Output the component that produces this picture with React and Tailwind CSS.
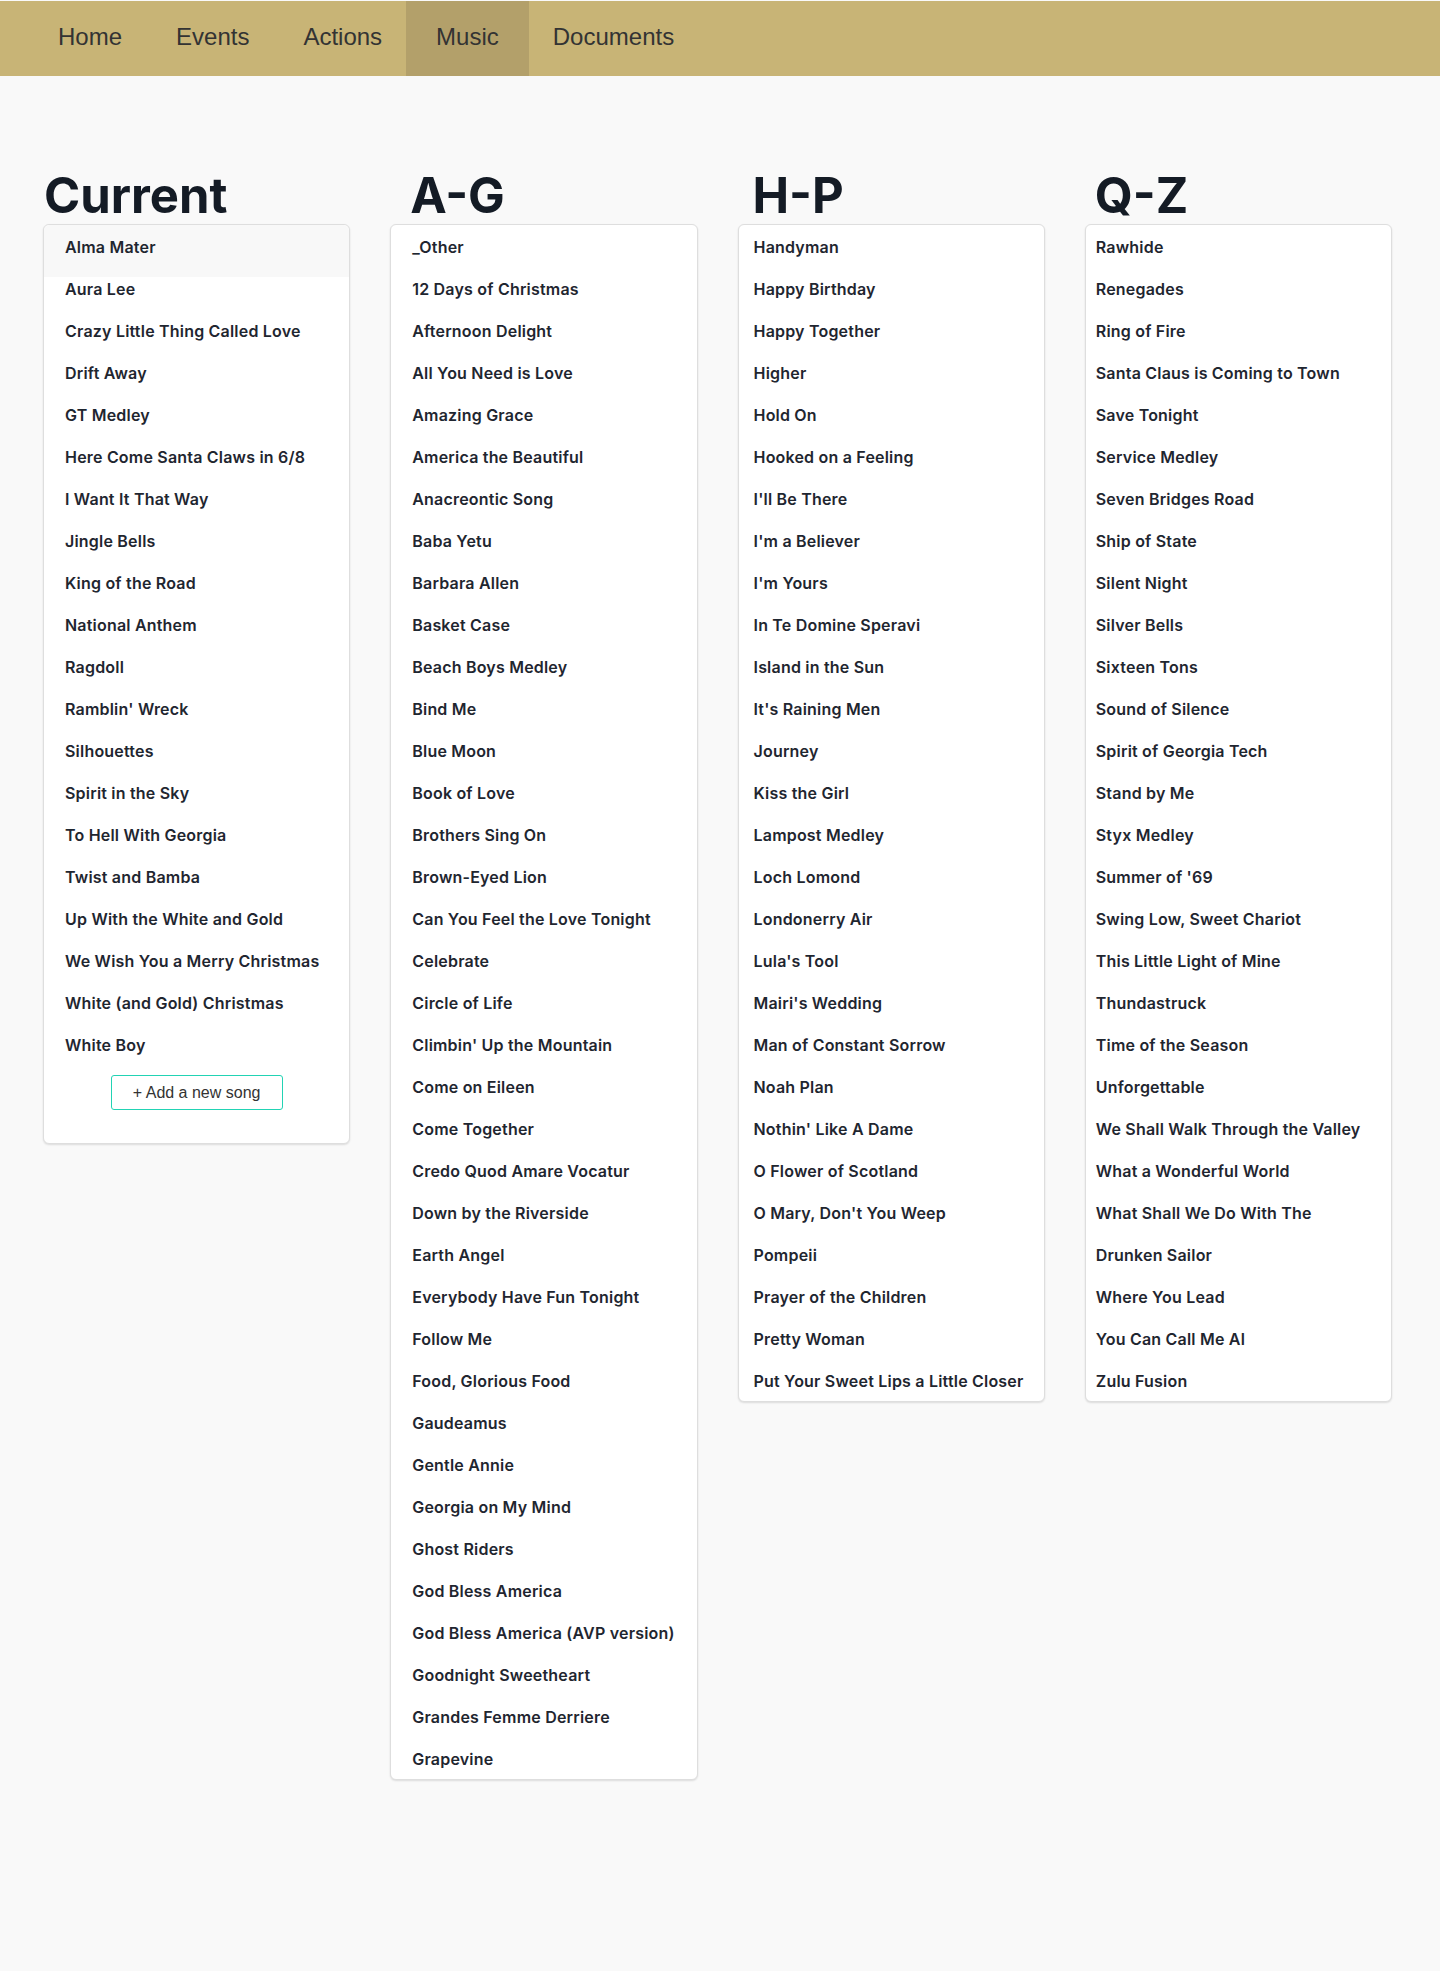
import React from "react";

const current = ["Alma Mater","Aura Lee","Crazy Little Thing Called Love","Drift Away","GT Medley","Here Come Santa Claws in 6/8","I Want It That Way","Jingle Bells","King of the Road","National Anthem","Ragdoll","Ramblin' Wreck","Silhouettes","Spirit in the Sky","To Hell With Georgia","Twist and Bamba","Up With the White and Gold","We Wish You a Merry Christmas","White (and Gold) Christmas","White Boy"];
const ag = ["_Other","12 Days of Christmas","Afternoon Delight","All You Need is Love","Amazing Grace","America the Beautiful","Anacreontic Song","Baba Yetu","Barbara Allen","Basket Case","Beach Boys Medley","Bind Me","Blue Moon","Book of Love","Brothers Sing On","Brown-Eyed Lion","Can You Feel the Love Tonight","Celebrate","Circle of Life","Climbin' Up the Mountain","Come on Eileen","Come Together","Credo Quod Amare Vocatur","Down by the Riverside","Earth Angel","Everybody Have Fun Tonight","Follow Me","Food, Glorious Food","Gaudeamus","Gentle Annie","Georgia on My Mind","Ghost Riders","God Bless America","God Bless America (AVP version)","Goodnight Sweetheart","Grandes Femme Derriere","Grapevine"];
const hp = ["Handyman","Happy Birthday","Happy Together","Higher","Hold On","Hooked on a Feeling","I'll Be There","I'm a Believer","I'm Yours","In Te Domine Speravi","Island in the Sun","It's Raining Men","Journey","Kiss the Girl","Lampost Medley","Loch Lomond","Londonerry Air","Lula's Tool","Mairi's Wedding","Man of Constant Sorrow","Noah Plan","Nothin' Like A Dame","O Flower of Scotland","O Mary, Don't You Weep","Pompeii","Prayer of the Children","Pretty Woman","Put Your Sweet Lips a Little Closer"];
const qz = ["Rawhide","Renegades","Ring of Fire","Santa Claus is Coming to Town","Save Tonight","Service Medley","Seven Bridges Road","Ship of State","Silent Night","Silver Bells","Sixteen Tons","Sound of Silence","Spirit of Georgia Tech","Stand by Me","Styx Medley","Summer of '69","Swing Low, Sweet Chariot","This Little Light of Mine","Thundastruck","Time of the Season","Unforgettable","We Shall Walk Through the Valley","What a Wonderful World","What Shall We Do With The","Drunken Sailor","Where You Lead","You Can Call Me Al","Zulu Fusion"];

function Row({ text, pad }) {
  return (
    <li className={`relative z-10 h-[42px] pt-[4px] leading-[37px] text-[16px] font-semibold tracking-[0.2px] text-[#1f2630] whitespace-nowrap ${pad}`}>
      {text}
    </li>
  );
}

function Column({ title, items, headPad, itemPad, highlight, children }) {
  return (
    <div className="flex flex-col">
      <h2 className={`h-[48px] leading-[48px] text-[49px] font-bold text-[#141b25] mb-[4px] ${headPad}`}>{title}</h2>
      <div className="relative isolate bg-white border border-[#dedede] rounded-[6px] shadow-[0_1px_2px_rgba(0,0,0,0.12)]">
        {highlight && (
          <div className="absolute left-0 right-0 top-0 h-[52px] bg-[#f8f8f8] rounded-t-[6px] z-0"></div>
        )}
        <ul>
          {items.map((t, i) => (
            <Row key={i} text={t} pad={itemPad} />
          ))}
        </ul>
        {children}
      </div>
    </div>
  );
}

export default function App() {
  const navItems = [
    { label: "Home", cls: "px-[27px]" },
    { label: "Events", cls: "px-[27px]" },
    { label: "Actions", cls: "pl-[27px] pr-[24px]" },
    { label: "Music", cls: "px-[30px] bg-[#b3a06a]" },
    { label: "Documents", cls: "pl-[24px] pr-[27px]" },
  ];
  return (
    <div className="min-h-[1971px] bg-[#f9f9f9] pt-px" style={{ fontFamily: "Inter, 'Noto Sans', sans-serif" }}>
      <nav className="h-[75px] bg-[#c8b476]">
        <ul className="flex h-full pl-[31px]" style={{ fontFamily: "'Liberation Sans', Arial, sans-serif" }}>
          {navItems.map((n) => (
            <li key={n.label} className={`h-[75px] leading-[71px] text-[24px] text-[#333333] ${n.cls}`}>
              {n.label}
            </li>
          ))}
        </ul>
      </nav>
      <main className="pt-[96px] pl-[43px] pb-[40px]">
        <div className="grid grid-cols-4 gap-x-[40px] w-[1349px] items-start">
          <Column title="Current" items={current} headPad="pl-[1px]" itemPad="pl-[21px]" highlight>
            <div className="flex justify-center pt-[10px] pb-[33px]">
              <button
                className="w-[172px] h-[35px] border border-[#22d3b4] rounded-[3px] bg-white text-[16px] text-[#333333]"
                style={{ fontFamily: "'Liberation Sans', Arial, sans-serif" }}
              >
                + Add a new song
              </button>
            </div>
          </Column>
          <Column title="A-G" items={ag} headPad="pl-[20px]" itemPad="pl-[21px]" />
          <Column title="H-P" items={hp} headPad="pl-[15px]" itemPad="pl-[15px]" />
          <Column title="Q-Z" items={qz} headPad="pl-[10px]" itemPad="pl-[10px]" />
        </div>
      </main>
    </div>
  );
}
